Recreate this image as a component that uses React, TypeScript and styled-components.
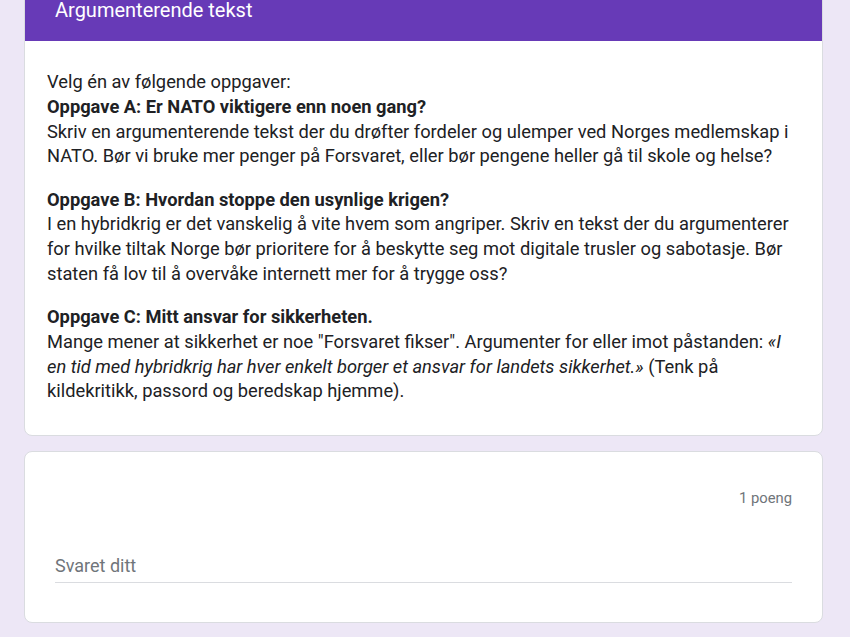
import React from "react"
import styled, { createGlobalStyle } from "styled-components"

const GlobalStyle = createGlobalStyle`
  html, body {
    margin: 0;
    padding: 0;
    background-color: #ede7f6;
    font-family: Roboto, "Liberation Sans", Arial, sans-serif;
    color: #202124;
  }
`

const Page = styled.div`
  display: flex;
  flex-direction: column;
  gap: 15px;
  margin-top: -24px;
  padding-left: 24px;
  width: 799px;
  padding-bottom: 40px;
`

const Card = styled.div`
  background-color: #fff;
  border: 1px solid #dadce0;
  border-radius: 8px;
  overflow: hidden;
`

const SectionHeader = styled.div`
  background-color: #673ab7;
  height: 64px;
  box-sizing: border-box;
  padding: 22px 30px 0;
  color: #fff;
  font-size: 20px;
  line-height: 22px;
`

const SectionBody = styled.div`
  padding: 29px 22px 31px;
  font-size: 18.3px;
  line-height: 24.75px;
`

const Task = styled.p<{ $first?: boolean }>`
  margin: ${(p) => (p.$first ? "0" : "18.5px 0 0")};
`

const Strong = styled.b`
  font-weight: 700;
`

const Quote = styled.i`
  font-style: italic;
`

const Question = styled.div`
  padding: 36px 30px 39px;
  display: flex;
  flex-direction: column;
`

const Points = styled.div`
  align-self: flex-end;
  font-size: 14.8px;
  line-height: 20px;
  color: #70757a;
`

const AnswerField = styled.div`
  margin-top: 46px;
  padding-bottom: 4px;
  border-bottom: 1px solid #dadce0;
  font-size: 18px;
  line-height: 24px;
  color: #70757a;
`

export default function App() {
  return (
    <>
      <GlobalStyle />
      <Page>
        <Card>
          <SectionHeader>Argumenterende tekst</SectionHeader>
          <SectionBody>
            <Task $first>
              Velg én av følgende oppgaver:
              <br />
              <Strong>Oppgave A: Er NATO viktigere enn noen gang?</Strong>
              <br />
              Skriv en argumenterende tekst der du drøfter fordeler og ulemper ved Norges
              medlemskap i NATO. Bør vi bruke mer penger på Forsvaret, eller bør pengene heller gå
              til skole og helse?
            </Task>
            <Task>
              <Strong>Oppgave B: Hvordan stoppe den usynlige krigen?</Strong>
              <br />
              I en hybridkrig er det vanskelig å vite hvem som angriper. Skriv en tekst der du
              argumenterer for hvilke tiltak Norge bør prioritere for å beskytte seg mot digitale
              trusler og sabotasje. Bør staten få lov til å overvåke internett mer for å trygge
              oss?
            </Task>
            <Task>
              <Strong>Oppgave C: Mitt ansvar for sikkerheten.</Strong>
              <br />
              Mange mener at sikkerhet er noe "Forsvaret fikser". Argumenter for eller imot
              påstanden:{" "}
              <Quote>
                «I en tid med hybridkrig har hver enkelt borger et ansvar for landets sikkerhet.»
              </Quote>{" "}
              (Tenk på kildekritikk, passord og beredskap hjemme).
            </Task>
          </SectionBody>
        </Card>
        <Card>
          <Question>
            <Points>1 poeng</Points>
            <AnswerField>Svaret ditt</AnswerField>
          </Question>
        </Card>
      </Page>
    </>
  )
}
